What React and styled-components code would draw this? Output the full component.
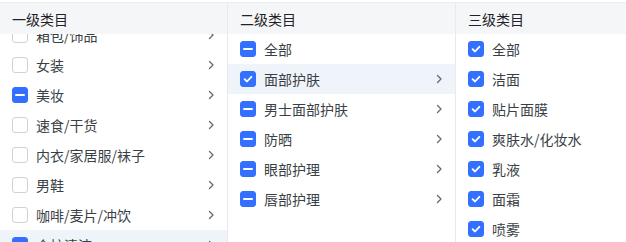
import React, { useEffect, useRef } from "react";
import styled, { createGlobalStyle } from "styled-components";

const GlobalStyle = createGlobalStyle`
  html, body {
    margin: 0;
    padding: 0;
    background: #fff;
    font-family: "Noto Sans CJK SC", "Noto Sans", sans-serif;
  }
`;

const level1 = [
  { label: "箱包/饰品", state: "none" },
  { label: "女装", state: "none" },
  { label: "美妆", state: "half" },
  { label: "速食/干货", state: "none" },
  { label: "内衣/家居服/袜子", state: "none" },
  { label: "男鞋", state: "none" },
  { label: "咖啡/麦片/冲饮", state: "none" },
  { label: "个护清洁", state: "half", active: true },
  { label: "家用电器", state: "none" },
];

const level2 = [
  { label: "全部", state: "half", noArrow: true },
  { label: "面部护肤", state: "checked", active: true },
  { label: "男士面部护肤", state: "half" },
  { label: "防晒", state: "half" },
  { label: "眼部护理", state: "half" },
  { label: "唇部护理", state: "half" },
];

const level3 = [
  "全部",
  "洁面",
  "贴片面膜",
  "爽肤水/化妆水",
  "乳液",
  "面霜",
  "喷雾",
].map((label) => ({ label, state: "checked", noArrow: true }));

const CheckBox = ({ state }) => (
  <Box $on={state !== "none"}>
    {state === "checked" && (
      <svg width="12" height="12" viewBox="0 0 12 12">
        <path
          d="M2.6 6.2 L5 8.5 L9.4 3.8"
          fill="none"
          stroke="#fff"
          strokeWidth="1.8"
          strokeLinecap="round"
          strokeLinejoin="round"
        />
      </svg>
    )}
    {state === "half" && <Bar />}
  </Box>
);

const Chevron = () => (
  <svg width="12" height="12" viewBox="0 0 12 12">
    <path
      d="M4.5 2.5 L8 6 L4.5 9.5"
      fill="none"
      stroke="#646a73"
      strokeWidth="1.3"
      strokeLinecap="round"
      strokeLinejoin="round"
    />
  </svg>
);

const Column = ({ title, items, width, scroll = 0, last }) => {
  const ref = useRef(null);
  useEffect(() => {
    if (ref.current) ref.current.scrollTop = scroll;
  }, [scroll]);
  return (
    <Col $width={width} $last={last}>
      <Header>{title}</Header>
      <List ref={ref}>
        {items.map((it) => (
          <Row key={it.label} $active={it.active}>
            <CheckBox state={it.state} />
            <Label>{it.label}</Label>
            {!it.noArrow && <Chevron />}
          </Row>
        ))}
      </List>
    </Col>
  );
};

export default function App() {
  return (
    <>
      <GlobalStyle />
      <Panel>
        <Column title="一级类目" items={level1} width={228} scroll={14} />
        <Column title="二级类目" items={level2} width={228} />
        <Column title="三级类目" items={level3} width={170} last />
      </Panel>
    </>
  );
}

const Panel = styled.div`
  display: flex;
  width: 626px;
  height: 240px;
  margin-top: 2px;
  border-top: 1px solid #eceef0;
  overflow: hidden;
`;

const Col = styled.div`
  display: flex;
  flex-direction: column;
  width: ${(p) => p.$width}px;
  flex-shrink: 0;
  box-sizing: border-box;
  border-right: ${(p) => (p.$last ? "none" : "1px solid #e8eaed")};
`;

const Header = styled.div`
  height: 31px;
  flex-shrink: 0;
  display: flex;
  align-items: center;
  padding-left: 12px;
  background: #f5f6f7;
  color: #1f2329;
  font-size: 14px;
`;

const List = styled.div`
  flex: 1;
  overflow: hidden;
`;

const Row = styled.div`
  height: 30px;
  display: flex;
  align-items: center;
  gap: 8px;
  padding: 0 10px 0 12px;
  background: ${(p) => (p.$active ? "#eff3fa" : "transparent")};
`;

const Label = styled.span`
  flex: 1;
  font-size: 14px;
  color: #3a3f46;
  white-space: nowrap;
`;

const Box = styled.span`
  width: 16px;
  height: 16px;
  box-sizing: border-box;
  border-radius: 3px;
  display: flex;
  align-items: center;
  justify-content: center;
  background: ${(p) => (p.$on ? "#3370ff" : "#fff")};
  border: 1px solid ${(p) => (p.$on ? "#3370ff" : "#d0d3d6")};
  flex-shrink: 0;
`;

const Bar = styled.span`
  width: 10px;
  height: 2px;
  background: #fff;
  border-radius: 1px;
`;
